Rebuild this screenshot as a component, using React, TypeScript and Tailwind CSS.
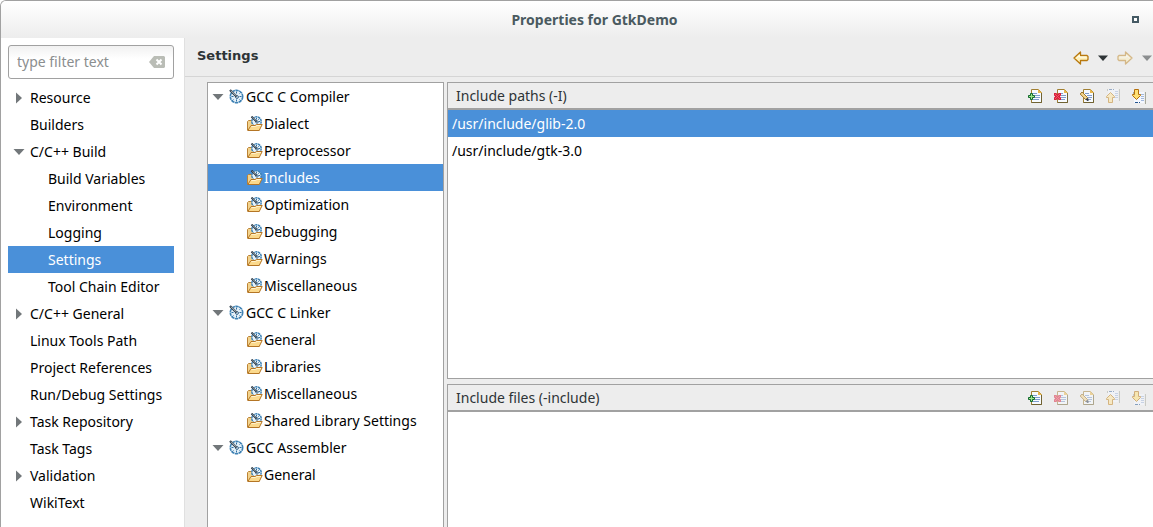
import { useState } from 'react';
import type { ReactNode } from 'react';
import { clsx } from 'clsx';

type PageItem = { label: string; state?: 'open' | 'closed'; child?: boolean };
type ToolItem = { label: string; group: string; root?: boolean };

const pages: PageItem[] = [
  { label: 'Resource', state: 'closed' },
  { label: 'Builders' },
  { label: 'C/C++ Build', state: 'open' },
  { label: 'Build Variables', child: true },
  { label: 'Environment', child: true },
  { label: 'Logging', child: true },
  { label: 'Settings', child: true },
  { label: 'Tool Chain Editor', child: true },
  { label: 'C/C++ General', state: 'closed' },
  { label: 'Linux Tools Path' },
  { label: 'Project References' },
  { label: 'Run/Debug Settings' },
  { label: 'Task Repository', state: 'closed' },
  { label: 'Task Tags' },
  { label: 'Validation', state: 'closed' },
  { label: 'WikiText' },
];

const tools: ToolItem[] = [
  { label: 'GCC C Compiler', group: 'compiler', root: true },
  { label: 'Dialect', group: 'compiler' },
  { label: 'Preprocessor', group: 'compiler' },
  { label: 'Includes', group: 'compiler' },
  { label: 'Optimization', group: 'compiler' },
  { label: 'Debugging', group: 'compiler' },
  { label: 'Warnings', group: 'compiler' },
  { label: 'Miscellaneous', group: 'compiler' },
  { label: 'GCC C Linker', group: 'linker', root: true },
  { label: 'General', group: 'linker' },
  { label: 'Libraries', group: 'linker' },
  { label: 'Miscellaneous', group: 'linker' },
  { label: 'Shared Library Settings', group: 'linker' },
  { label: 'GCC Assembler', group: 'assembler', root: true },
  { label: 'General', group: 'assembler' },
];

const Expander = ({ open }: { open: boolean }) => (
  <svg className="size-3 shrink-0" viewBox="0 0 12 12" fill="#72777a">
    <path d={open ? 'M0.5 3h11L6 9z' : 'M3 0.5v11L9 6z'} />
  </svg>
);

const ToolIcon = () => (
  <svg className="size-4 shrink-0" viewBox="0 0 16 16" fill="none">
    <circle cx="7.5" cy="7.5" r="6.2" fill="#e4f0f8" stroke="#3f82b4" strokeWidth="1.6" strokeDasharray="3.4 0.5" />
    <path d="M7.5 2.500v2M7.500 10.500v2M2.500 7.500h2M10.500 7.500h2M10.500 4.500l1-1M10.500 10.500l1 1M4.500 10.500l-1 1" stroke="#2a6da3" />
    <circle cx="8" cy="8" r="1.400" fill="#fff" stroke="#2f5f85" />
    <path d="M1 1l6.500 6.500" stroke="#2b3a47" strokeWidth="2.200" />
    <path d="M2 1.700l5 5" stroke="#dbe5ea" strokeWidth=".9" />
  </svg>
);

const FolderIcon = () => (
  <svg className="size-4 shrink-0" viewBox="0 0 16 16" fill="none">
    <path d="M.5 14V5.500l1-1h3l1 1.500h7V14z" fill="#f3d38d" stroke="#bb8234" />
    <circle cx="9.500" cy="5.500" r="4.700" fill="#e8f3fa" stroke="#3e82b5" strokeWidth="1.500" strokeDasharray="2.300 0.600" />
    <path d="M9.500 2v1.500M13 5.500h-1.500M11.300 3.700l1-1" stroke="#2a6da3" />
    <circle cx="10" cy="6" r="1.200" fill="#fff" stroke="#2f5f85" />
    <path d="M4.500.5l5 5" stroke="#24323e" strokeWidth="1.900" />
    <path d="M5.500 1.200l3.500 3.500" stroke="#dbe5ea" strokeWidth=".7" />
    <path d="M.8 14.500L4 9.500h4l1.500-1h5.700l-3 6z" fill="#fbd98c" stroke="#b47525" />
    <path d="M4.500 10.500h4l1.500-1h4" stroke="#fff3cf" />
  </svg>
);

const Sheet = () => (
  <>
    <path d="M4.500 1.500h7l3 3v10h-10z" fill="#f8fbff" stroke="#a07f33" />
    <path d="M14.500 5v9.500h-10" stroke="#6f6232" />
    <path d="M11 1v4h4z" fill="#e9b74c" />
    <path d="M6 5.500h4M8 7.500h5M8 9.500h5M6 11.500h6" stroke="#7f9ccd" />
  </>
);

const Lines = ({ y }: { y: number }) => (
  <>
    <path d={`M3 ${y}h10v11H3z`} fill="#f4f8ff" />
    <path d={`M10 ${y + 2.5}h3M10 ${y + 4.5}h3M10 ${y + 6.5}h3M10 ${y + 8.5}h3`} stroke="#a3b9dd" />
    <path d={`M14.500 ${y}v12M2.500 ${y}v2`} stroke="#a7a99c" />
  </>
);

const arrowUp = 'M5.500 4.500l4 4v1h-2v5h-4v-5h-2v-1z';
const arrowDown = 'M3.500 1.500h4v5h2v1l-4 4-4-4v-1h2z';

const actions: { name: string; icon: ReactNode }[] = [
  {
    name: 'Add',
    icon: (
      <>
        <Sheet />
        <path d="M3.500 5.500h2v2h2v2h-2v2h-2v-2h-2v-2h2z" fill="#4dba58" stroke="#12682f" />
        <path d="M4.500 6v5M2 8.500h5" stroke="#a0e58a" />
      </>
    ),
  },
  {
    name: 'Delete',
    icon: (
      <>
        <Sheet />
        <path d="M1 5h2.500l1 1.500 1-1.500H8v2.500L6.800 8.500 8 9.500V12H5.500l-1-1.500-1 1.500H1V9.500l1.200-1L1 7.500z" fill="#d91f3a" />
        <path d="M2 6l5 5M7 6l-5 5" stroke="#ef5465" />
      </>
    ),
  },
  {
    name: 'Edit',
    icon: (
      <>
        <Sheet />
        <path d="M1.200 6L3 4l5.500 5.500.5 2.500-2.500-.5z" fill="#f4d58c" stroke="#9d762d" />
        <path d="M6.500 11l2 2h1v-2l-1-1z" fill="#24334f" />
      </>
    ),
  },
  {
    name: 'Move Up',
    icon: (
      <>
        <Lines y={1} />
        <path d="M4 1.500h3M8 1.500h1" stroke="#486d9e" />
        <path d={arrowUp} fill="#ffe49a" stroke="#bd7d16" />
      </>
    ),
  },
  {
    name: 'Move Down',
    icon: (
      <>
        <Lines y={4} />
        <path d="M4 14.500h3M8 14.500h1" stroke="#24558e" />
        <path d={arrowDown} fill="#ffe174" stroke="#b46f0b" />
      </>
    ),
  },
];

const NavArrow = ({ flip }: { flip?: boolean }) => (
  <svg className={clsx('size-4', flip && '-scale-x-100 opacity-45')} viewBox="0 0 16 16">
    <path d="M7.500 2L1 8l6.500 6v-3.500h6.500l1-1v-3l-1-1H7.500z" fill="#fff0b8" stroke="#b8790f" strokeWidth="1.300" strokeLinejoin="round" />
    <path d="M3.500 8L6.500 5.500v1.500h7" stroke="#fffdf0" fill="none" />
  </svg>
);

const NavMenu = ({ color }: { color: string }) => (
  <svg className="h-4 w-3" viewBox="0 0 12 16">
    <path d="M1 5.500h10L6 11z" fill={color} />
  </svg>
);

type PathListProps = { title: string; entries: string[]; disabled: string[]; className?: string };

const PathList = ({ title, entries, disabled, className }: PathListProps) => {
  const [selected, setSelected] = useState(0);

  return (
    <section className={clsx('flex flex-col border border-r-0 border-[#a1a1a1]', className)}>
      <header className="flex h-[27px] shrink-0 items-center justify-between border-b-2 border-[#a1a1a1] bg-[#ededed] pr-1.5 pl-2">
        <h2 className="pt-px text-[#2e3436]">{title}</h2>
        <div className="flex gap-2.5">
          {actions.map(({ name, icon }) => {
            const off = disabled.includes(name);
            return (
              <button key={name} type="button" aria-label={name} title={name} disabled={off}>
                <svg className={clsx('size-4', off && 'opacity-50')} viewBox="0 0 16 16" fill="none">
                  {icon}
                </svg>
              </button>
            );
          })}
        </div>
      </header>
      <ul className="flex-1 bg-white">
        {entries.map((entry, i) => (
          <li key={entry}>
            <button
              type="button"
              onClick={() => setSelected(i)}
              className={clsx('flex h-[27px] w-full items-center pt-px pl-1', i === selected && 'bg-[#4a90d9] text-white')}>
              {entry}
            </button>
          </li>
        ))}
      </ul>
    </section>
  );
};

const App = () => {
  const [page, setPage] = useState('Settings');
  const [tool, setTool] = useState('compiler/Includes');

  return (
    <div className="flex min-h-screen flex-col overflow-hidden rounded-tl-md border-t border-l border-[#a1a1a1] bg-[#ededed] font-['Noto_Sans','Open_Sans',sans-serif] text-sm whitespace-nowrap text-black">
      <header className="flex h-[37px] shrink-0 items-center bg-linear-to-b from-white to-[#ededed] pr-3.5 pl-14">
        <h1 className="flex-1 text-center font-bold text-[#4a5a60]">Properties for GtkDemo</h1>
        <button type="button" aria-label="Maximize" className="size-[7px] border-2 border-[#455a64] bg-white" />
      </header>

      <div className="flex flex-1">
        <nav className="w-[184px] shrink-0 border-r border-[#e0e0e0] bg-white pt-[7px] pr-[10px] pl-[7px]">
          <div className="mb-[5px] flex h-[34px] items-center rounded-[3px] border border-[#a1a1a1] bg-linear-to-b from-[#f1f1f1] to-white to-40% px-2">
            <input
              type="text"
              aria-label="Filter pages"
              placeholder="type filter text"
              className="min-w-0 flex-1 bg-transparent outline-none placeholder:text-[#8b8e8f]"
            />
            <button type="button" aria-label="Clear filter">
              <svg className="h-3 w-4" viewBox="0 0 16 12">
                <path d="M0 6l5-6h10l1 1v10l-1 1H5z" fill="#babdb6" />
                <path d="M7.500 3.500l5 5M12.500 3.500l-5 5" stroke="#fff" strokeWidth="2" />
              </svg>
            </button>
          </div>
          <ul>
            {pages.map(({ label, state, child }) => (
              <li key={label}>
                <button
                  type="button"
                  onClick={() => setPage(label)}
                  className={clsx(
                    'flex h-[27px] w-full items-center pt-px',
                    child ? 'pl-10' : state ? 'gap-[5px] pl-[5px]' : 'pl-[22px]',
                    page === label && 'bg-[#4a90d9] text-white',
                  )}>
                  {state && <Expander open={state === 'open'} />}
                  {label}
                </button>
              </li>
            ))}
          </ul>
        </nav>

        <main className="flex min-w-0 flex-1 flex-col">
          <header className="flex h-[39px] shrink-0 items-center justify-between border-b border-[#d5d5d5] pl-3">
            <h2 className="pb-0.5 font-['DejaVu_Sans',sans-serif] text-[13px] font-bold text-[#2e3436]">Settings</h2>
            <div className="flex items-center gap-2 pt-0.5">
              <button type="button" aria-label="Back">
                <NavArrow />
              </button>
              <button type="button" aria-label="Back history">
                <NavMenu color="#2e3436" />
              </button>
              <button type="button" aria-label="Forward" disabled>
                <NavArrow flip />
              </button>
              <button type="button" aria-label="Forward history" disabled>
                <NavMenu color="#8b8e8f" />
              </button>
            </div>
          </header>

          <div className="flex flex-1 gap-[3px] pt-[5px] pl-[22px]">
            <ul className="w-[237px] shrink-0 border border-b-0 border-[#a1a1a1] bg-white">
              {tools.map(({ label, group, root }) => {
                const id = `${group}/${label}`;
                return (
                  <li key={id}>
                    <button
                      type="button"
                      onClick={() => setTool(id)}
                      className={clsx(
                        'flex h-[27px] w-full items-center pt-px',
                        root ? 'gap-[5px] pl-1' : 'pl-[39px]',
                        tool === id && 'bg-[#4a90d9] text-white',
                      )}>
                      {root && <Expander open />}
                      <span className="flex items-center gap-px">
                        {root ? <ToolIcon /> : <FolderIcon />}
                        {label}
                      </span>
                    </button>
                  </li>
                );
              })}
            </ul>

            <div className="flex min-w-0 flex-1 flex-col gap-[5px]">
              <PathList
                title="Include paths (-I)"
                entries={['/usr/include/glib-2.0', '/usr/include/gtk-3.0']}
                disabled={['Move Up']}
                className="h-[297px]"
              />
              <PathList
                title="Include files (-include)"
                entries={[]}
                disabled={['Delete', 'Edit', 'Move Up', 'Move Down']}
                className="flex-1 border-b-0"
              />
            </div>
          </div>
        </main>
      </div>
    </div>
  );
};

export default App;
